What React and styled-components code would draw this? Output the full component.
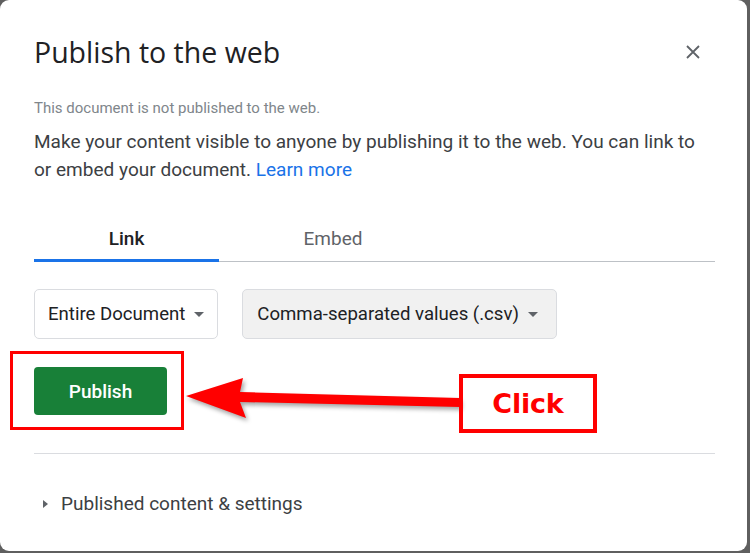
import React from 'react';
import styled, { createGlobalStyle } from 'styled-components';

const GlobalStyle = createGlobalStyle`
  html, body {
    margin: 0;
    padding: 0;
    background: #5f5f5f;
  }
  body {
    font-family: Roboto, "Noto Sans", Arial, sans-serif;
  }
`;

const Dialog = styled.div`
  position: relative;
  box-sizing: border-box;
  width: 747px;
  height: 551px;
  background: #ffffff;
  border-radius: 9px;
  padding: 36px 32px 0 34px;
  overflow: hidden;
`;

const Header = styled.div`
  display: flex;
  align-items: center;
  justify-content: space-between;
  height: 32px;
`;

const Title = styled.h1`
  margin: 0;
  font-family: "Open Sans", Roboto, Arial, sans-serif;
  font-size: 28.5px;
  font-weight: 400;
  line-height: 32px;
  color: #202124;
  letter-spacing: 0;
`;

const CloseButton = styled.button`
  display: flex;
  align-items: center;
  justify-content: center;
  width: 24px;
  height: 24px;
  margin-right: 10px;
  padding: 0;
  border: 0;
  background: none;
  color: #5f6368;
`;

const Notice = styled.p`
  margin: 30px 0 0;
  font-size: 15px;
  line-height: 20px;
  color: #80868b;
`;

const Lead = styled.p`
  margin: 10px 0 0;
  font-size: 19.05px;
  line-height: 28px;
  color: #3c4043;
`;

const LearnMore = styled.a`
  color: #1a73e8;
  text-decoration: none;
`;

const Tabs = styled.div`
  display: flex;
  margin-top: 31px;
  border-bottom: 1px solid #bdc1c6;
`;

const Tab = styled.div`
  box-sizing: border-box;
  width: ${(p) => p.$width}px;
  padding: 12px 0 8px;
  text-align: center;
  font-size: 19px;
  line-height: 24px;
  font-weight: ${(p) => (p.$active ? 500 : 400)};
  color: ${(p) => (p.$active ? '#202124' : '#5f6368')};
  border-bottom: 3px solid ${(p) => (p.$active ? '#1a73e8' : 'transparent')};
  margin-bottom: -1px;
`;

const Selects = styled.div`
  display: flex;
  gap: 24px;
  margin-top: 27px;
`;

const Select = styled.div`
  box-sizing: border-box;
  display: flex;
  align-items: center;
  gap: 9px;
  height: 50px;
  padding: ${(p) => (p.$filled ? '0 18px 0 14px' : '0 13px 0 13px')};
  border: 1px solid #dadce0;
  border-radius: 5px;
  background: ${(p) => (p.$filled ? '#f1f1f1' : '#ffffff')};
  font-size: 18.6px;
  color: #202124;
`;

const Caret = styled.span`
  width: 0;
  height: 0;
  border-left: 5px solid transparent;
  border-right: 5px solid transparent;
  border-top: 5px solid #5f6368;
`;

const PublishButton = styled.button`
  display: block;
  width: 133px;
  height: 48px;
  margin-top: 28px;
  border: 0;
  border-radius: 4px;
  background: #188038;
  color: #ffffff;
  font-family: Roboto, "Noto Sans", Arial, sans-serif;
  font-size: 19px;
  font-weight: 500;
`;

const Divider = styled.hr`
  margin: 38px 0 0;
  border: 0;
  border-top: 1px solid #dadce0;
`;

const Expander = styled.div`
  display: flex;
  align-items: center;
  gap: 13px;
  margin-top: 38px;
  padding-left: 9px;
  font-size: 19px;
  line-height: 24px;
  color: #3c4043;
`;

const SideCaret = styled.span`
  width: 0;
  height: 0;
  border-top: 4px solid transparent;
  border-bottom: 4px solid transparent;
  border-left: 5px solid #5f6368;
`;

// annotation overlay
const Highlight = styled.div`
  position: absolute;
  box-sizing: border-box;
  left: ${(p) => p.$x}px;
  top: ${(p) => p.$y}px;
  width: ${(p) => p.$w}px;
  height: ${(p) => p.$h}px;
  border: ${(p) => p.$border}px solid #ff0000;
  display: flex;
  align-items: center;
  justify-content: center;
`;

const ClickLabel = styled.span`
  font-family: "DejaVu Sans", Verdana, sans-serif;
  font-weight: 700;
  font-size: 27px;
  color: #ff0000;
  letter-spacing: -0.2px;
`;

const Arrow = styled.svg`
  position: absolute;
  left: 0;
  top: 0;
  overflow: visible;
  filter: drop-shadow(2px 3px 2px rgba(0, 0, 0, 0.35));
`;

const App = () => {
  return (
    <>
      <GlobalStyle />
      <Dialog>
        <Header>
          <Title>Publish to the web</Title>
          <CloseButton aria-label="Close">
            <svg width="14" height="14" viewBox="0 0 14 14">
              <path d="M1 1L13 13M13 1L1 13" stroke="#5f6368" strokeWidth="1.8" />
            </svg>
          </CloseButton>
        </Header>
        <Notice>This document is not published to the web.</Notice>
        <Lead>
          Make your content visible to anyone by publishing it to the web. You can link to
          or embed your document. <LearnMore href="#">Learn more</LearnMore>
        </Lead>
        <Tabs>
          <Tab $active $width={185}>Link</Tab>
          <Tab $width={228}>Embed</Tab>
        </Tabs>
        <Selects>
          <Select>
            Entire Document <Caret />
          </Select>
          <Select $filled>
            Comma-separated values (.csv) <Caret />
          </Select>
        </Selects>
        <PublishButton>Publish</PublishButton>
        <Divider />
        <Expander>
          <SideCaret />
          Published content &amp; settings
        </Expander>

        <Highlight $x={10} $y={351} $w={174} $h={79} $border={3} />
        <Arrow width="750" height="553">
          <polygon
            points="186,396 243,378 240,392 460,398 460,407 240,402 246,418"
            fill="#ff0000"
          />
        </Arrow>
        <Highlight $x={459} $y={374} $w={138} $h={59} $border={4}>
          <ClickLabel>Click</ClickLabel>
        </Highlight>
      </Dialog>
    </>
  );
};

export default App;
